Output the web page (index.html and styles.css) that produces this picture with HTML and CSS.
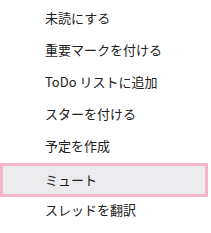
FILE: index.html
```html
<!DOCTYPE html>
<html lang="ja">
<head>
<meta charset="utf-8">
<link rel="stylesheet" href="styles.css">
</head>
<body>
<ul class="menu">
  <li class="item">未読にする</li>
  <li class="item">重要マークを付ける</li>
  <li class="item">ToDo リストに追加</li>
  <li class="item">スターを付ける</li>
  <li class="item">予定を作成</li>
  <li class="item item-active">ミュート</li>
  <li class="item">スレッドを翻訳</li>
</ul>
</body>
</html>
```
FILE: styles.css
```css
html, body {
  margin: 0;
  padding: 0;
  background: #ffffff;
}
body {
  width: 211px;
  height: 233px;
  overflow: hidden;
  font-family: "Noto Sans CJK JP", "Noto Sans", sans-serif;
  font-size: 13px;
  font-weight: 400;
  color: #202020;
}
.menu {
  list-style: none;
  margin: 0;
  padding: 2px 0 0 0;
  width: 208px;
}
.item {
  height: 32px;
  line-height: 32px;
  padding-left: 45px;
  box-sizing: border-box;
  white-space: nowrap;
}
.item-active {
  background: #ececef;
  border: 3px solid #f4b5cb;
  padding-left: 42px;
  height: 34px;
  line-height: 28px;
  margin-top: 1px;
  margin-bottom: -3px;
}
```
